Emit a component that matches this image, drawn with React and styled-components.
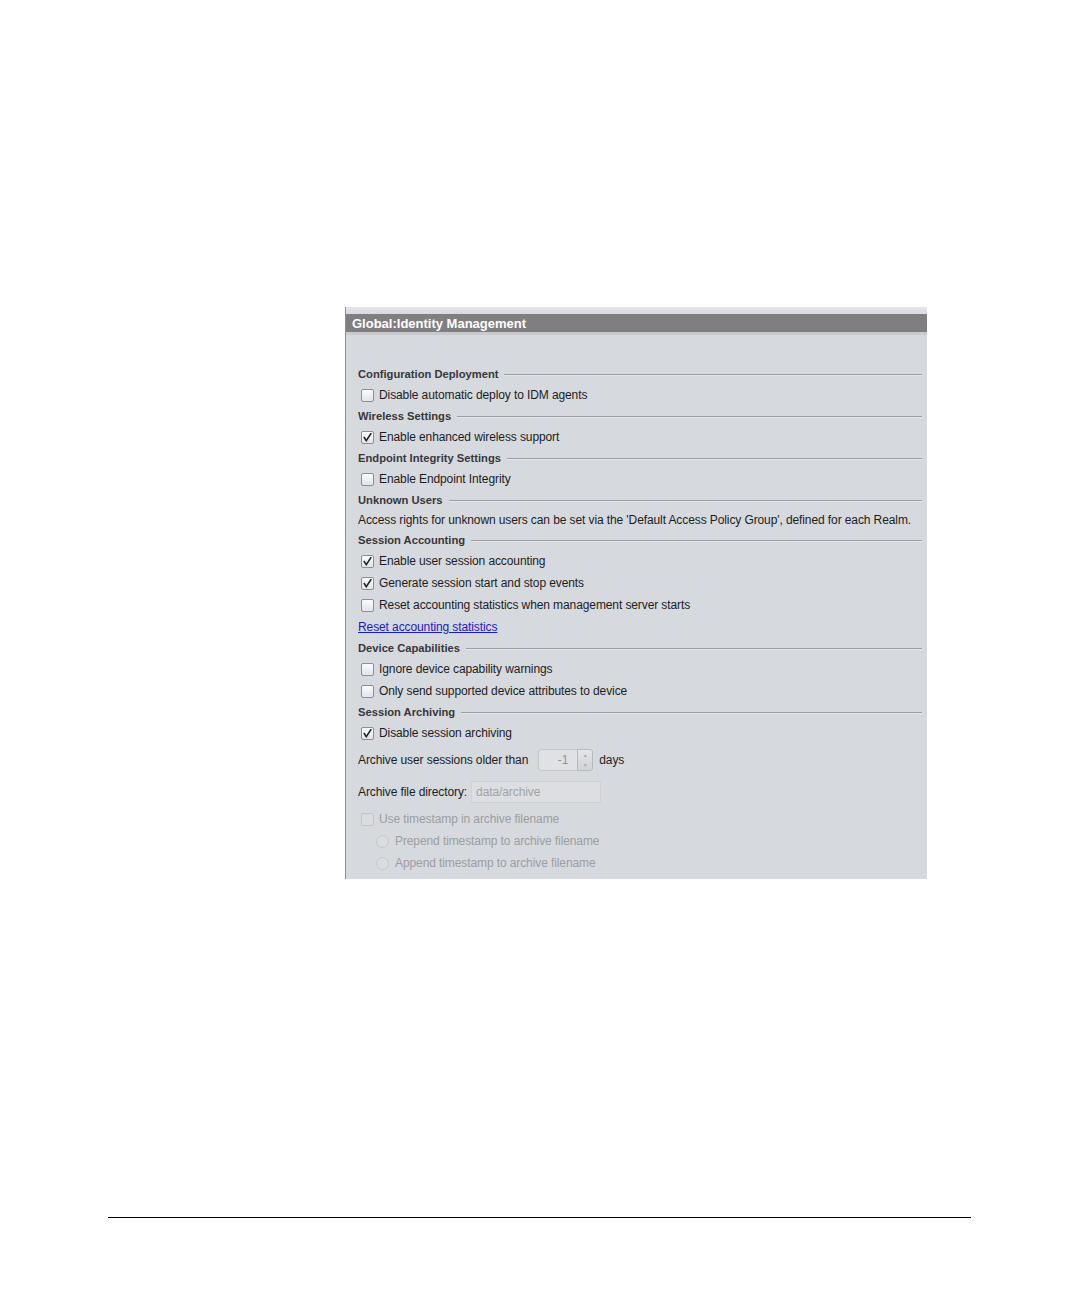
import React from "react";
import styled, { createGlobalStyle } from "styled-components";

const GlobalStyle = createGlobalStyle`
  html, body { margin: 0; padding: 0; background: #ffffff; }
  body { font-family: "Liberation Sans", Arial, sans-serif; }
`;

const Page = styled.div`
  width: 1081px;
  height: 1297px;
  padding-top: 307px;
  box-sizing: border-box;
  display: flex;
  flex-direction: column;
`;

const Panel = styled.div`
  margin-left: 345px;
  width: 582px;
  height: 572px;
  box-sizing: border-box;
  border-left: 1px solid #8e8f93;
  background: #d6d9dd;
  display: flex;
  flex-direction: column;
`;

const TopStrip = styled.div`
  height: 7px;
  background: linear-gradient(#e6e7ec, #d9dade);
`;

const Header = styled.div`
  height: 18px;
  background: #807e81;
  color: #ffffff;
  font-weight: bold;
  font-size: 13px;
  line-height: 19px;
  padding-left: 6px;
  white-space: nowrap;
`;

const HeaderShade = styled.div`
  height: 3px;
  background: #c9cace;
`;

const Body = styled.div`
  padding: 29px 5px 0 12px;
  display: flex;
  flex-direction: column;
`;

const Heading = styled.div`
  height: 20px;
  display: flex;
  align-items: center;
  gap: 6px;
  font-size: 11.2px;
  font-weight: bold;
  color: #36373b;
  white-space: nowrap;
  &::after {
    content: "";
    flex: 1;
    height: 1px;
    background: #9d9fa3;
    box-shadow: 0 1px 0 #e4e6e9;
    margin-top: 1px;
  }
`;

const Row = styled.div`
  height: ${(p) => p.$h || 22}px;
  display: flex;
  align-items: center;
  padding-left: ${(p) => p.$indent || 0}px;
  font-size: 12px;
  letter-spacing: -0.1px;
  color: ${(p) => (p.$disabled ? "#9c9ea2" : "#1d1d1f")};
  white-space: nowrap;
`;

const Box = styled.span`
  width: 13px;
  height: 13px;
  box-sizing: border-box;
  border-radius: 2px;
  border: 1px solid ${(p) => (p.$disabled ? "#c3c5c9" : "#8c8e92")};
  background: ${(p) =>
    p.$disabled ? "#d9dbdf" : "linear-gradient(#fbfbfc, #e2e4e8)"};
  margin-left: 3px;
  margin-right: 5px;
  display: inline-flex;
  align-items: center;
  justify-content: center;
  flex: none;
`;

const Radio = styled.span`
  width: 13px;
  height: 13px;
  box-sizing: border-box;
  border-radius: 50%;
  border: 1px solid #c5c7cb;
  background: #dadce0;
  margin-left: 18px;
  margin-right: 6px;
  flex: none;
`;

const Link = styled.a`
  color: #1a1ad0;
  text-decoration: underline;
  font-size: 12px;
  letter-spacing: -0.1px;
  cursor: pointer;
`;

const Spinner = styled.div`
  display: flex;
  height: 22px;
  margin-left: 10px;
  margin-right: 6px;
`;

const SpinInput = styled.div`
  width: 39px;
  box-sizing: border-box;
  border: 1px solid #c6c8cc;
  border-right: none;
  border-radius: 3px 0 0 3px;
  background: #dfe1e4;
  color: #909296;
  font-size: 12px;
  text-align: right;
  padding-right: 9px;
  line-height: 20px;
`;

const SpinButtons = styled.div`
  width: 16px;
  box-sizing: border-box;
  border: 1px solid #b7b9bd;
  border-radius: 0 3px 3px 0;
  background: linear-gradient(#e4e6e9, #d0d3d7);
  display: flex;
  flex-direction: column;
  align-items: center;
  justify-content: space-around;
  color: #a9abaf;
  font-size: 5px;
  line-height: 5px;
`;

const Field = styled.div`
  margin-left: 4px;
  width: 130px;
  height: 22px;
  box-sizing: border-box;
  border: 1px solid #d0d2d6;
  background: #dcdee1;
  color: #a2a4a8;
  font-size: 12px;
  line-height: 20px;
  padding-left: 4px;
`;

const Footer = styled.div`
  margin-top: 338px;
  margin-left: 108px;
  width: 863px;
  height: 1px;
  background: #000000;
`;

const Check = () => (
  <svg width="9" height="9" viewBox="0 0 9 9">
    <path
      d="M1.3 4.6 L3.3 7.6 L7.8 0.8"
      fill="none"
      stroke="#1f2024"
      strokeWidth="1.6"
      strokeLinecap="square"
    />
  </svg>
);

const CheckItem = ({ checked, disabled, children }) => (
  <Row $disabled={disabled}>
    <Box $disabled={disabled}>{checked && <Check />}</Box>
    {children}
  </Row>
);

export default function App() {
  return (
    <>
      <GlobalStyle />
      <Page>
        <Panel>
          <TopStrip />
          <Header>Global:Identity Management</Header>
          <HeaderShade />
          <Body>
            <Heading>Configuration Deployment</Heading>
            <CheckItem>Disable automatic deploy to IDM agents</CheckItem>
            <Heading>Wireless Settings</Heading>
            <CheckItem checked>Enable enhanced wireless support</CheckItem>
            <Heading>Endpoint Integrity Settings</Heading>
            <CheckItem>Enable Endpoint Integrity</CheckItem>
            <Heading>Unknown Users</Heading>
            <Row $h={20}>
              Access rights for unknown users can be set via the 'Default Access
              Policy Group', defined for each Realm.
            </Row>
            <Heading>Session Accounting</Heading>
            <CheckItem checked>Enable user session accounting</CheckItem>
            <CheckItem checked>Generate session start and stop events</CheckItem>
            <CheckItem>
              Reset accounting statistics when management server starts
            </CheckItem>
            <Row>
              <Link>Reset accounting statistics</Link>
            </Row>
            <Heading>Device Capabilities</Heading>
            <CheckItem>Ignore device capability warnings</CheckItem>
            <CheckItem>Only send supported device attributes to device</CheckItem>
            <Heading>Session Archiving</Heading>
            <CheckItem checked>Disable session archiving</CheckItem>
            <Row $h={32}>
              Archive user sessions older than
              <Spinner>
                <SpinInput>-1</SpinInput>
                <SpinButtons>
                  <span>▲</span>
                  <span>▼</span>
                </SpinButtons>
              </Spinner>
              days
            </Row>
            <Row $h={32}>
              Archive file directory:
              <Field>data/archive</Field>
            </Row>
            <CheckItem disabled>Use timestamp in archive filename</CheckItem>
            <Row $disabled>
              <Radio />
              Prepend timestamp to archive filename
            </Row>
            <Row $disabled>
              <Radio />
              Append timestamp to archive filename
            </Row>
          </Body>
        </Panel>
        <Footer />
      </Page>
    </>
  );
}
